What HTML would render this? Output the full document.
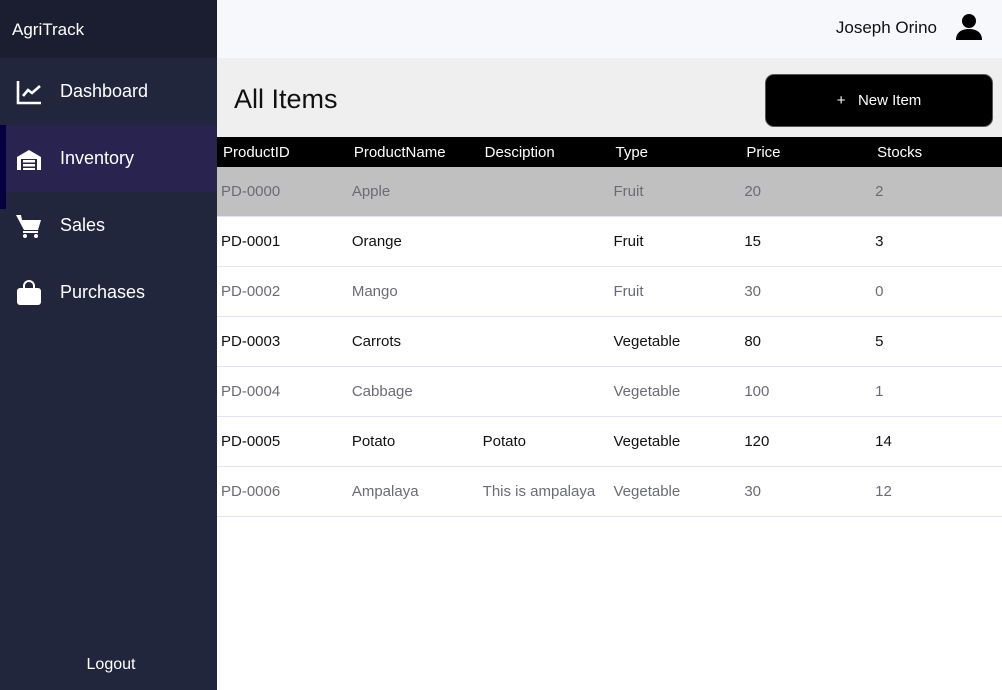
<!DOCTYPE html>
<html><head><style>
*{margin:0;padding:0;box-sizing:border-box}
body{width:1002px;height:690px;overflow:hidden;font-family:"Liberation Sans","DejaVu Sans",sans-serif;background:#fff;position:relative}
#side{position:absolute;left:0;top:0;width:217px;height:690px;background:#22263d;color:#fff}
#brand{height:58px;background:#1b1e31;font-size:17px;padding:20px 0 0 12px}
.nav{height:67px;display:flex;align-items:center;font-size:18px;position:relative}
.nav svg{position:absolute;left:16px;width:26px;height:26px}
.nav span{position:absolute;left:60px}
.nav.act{background:#29234f}
#bar{position:absolute;left:0;top:125px;width:6px;height:84px;background:#050040}
#logout{position:absolute;bottom:16px;left:0;width:222px;text-align:center;font-size:16px}
#top{position:absolute;left:217px;top:0;right:0;height:58px;background:#f7f8fc}
#user{position:absolute;right:65px;top:18px;font-size:17px;color:#111}
#head{position:absolute;left:217px;top:58px;right:0;height:79px;background:#efefef}
#head h1{position:absolute;left:17px;top:26px;font-weight:normal;font-size:27px;color:#111}
#btn{position:absolute;left:548px;top:16px;width:228px;height:53px;background:#000;border-radius:9px;border:1px solid #555;color:#fff;font-size:15px;text-align:center;line-height:51px}
#tbl{position:absolute;left:217px;top:137px;width:785px;font-size:15px}
.r{display:flex;height:50px;align-items:center;border-bottom:1px solid #e4e2fa;color:#111}
.r div{width:131.5px;padding-left:4px;white-space:nowrap}
.h{height:30px;background:#000;color:#fff;border:none}
.h div{padding-left:6px}
.g{color:#6b6b78}
.s{background:#c0c0c0;color:#6b6b78}
</style></head><body>
<div id="side">
<div id="brand">AgriTrack</div>
<div class="nav"><svg viewBox="0 0 26 26" fill="none" stroke="#fff" stroke-width="2.6"><path d="M2 2V24H25"/><path d="M7 17L12 11L16 14L24 7"/></svg><span>Dashboard</span></div>
<div class="nav act"><svg viewBox="0 0 26 26" fill="#fff"><path d="M1 11L13 4L25 11V24H21V13H5V24H1Z"/><rect x="7" y="14" width="12" height="2.5"/><rect x="7" y="18" width="12" height="2.5"/><rect x="7" y="22" width="12" height="2"/></svg><span>Inventory</span></div>
<div class="nav"><svg viewBox="0 0 26 26" fill="#fff"><path d="M0 2H5L6 7H25L22 17H8Z" /><rect x="7" y="18" width="15" height="2"/><circle cx="9" cy="23" r="2"/><circle cx="20" cy="23" r="2"/></svg><span>Sales</span></div>
<div class="nav"><svg viewBox="0 0 26 26"><path d="M8 9V6a5 5 0 0110 0v3" fill="none" stroke="#fff" stroke-width="2"/><rect x="1" y="8" width="24" height="17" rx="3" fill="#fff"/></svg><span>Purchases</span></div>
<div id="bar"></div>
<div id="logout">Logout</div>
</div>
<div id="top"><div id="user">Joseph Orino</div>
<svg style="position:absolute;right:19px;top:13px" width="28" height="28" viewBox="0 0 28 28" fill="#000"><circle cx="14" cy="8" r="7"/><path d="M1 27C1 19 7 16 14 16S27 19 27 27Z"/></svg></div>
<div id="head"><h1>All Items</h1><div id="btn">+&nbsp;&nbsp; New Item</div></div>
<div id="tbl">
<div class="r h"><div>ProductID</div><div>ProductName</div><div>Desciption</div><div>Type</div><div>Price</div><div>Stocks</div></div>
<div class="r s"><div>PD-0000</div><div>Apple</div><div></div><div>Fruit</div><div>20</div><div>2</div></div>
<div class="r"><div>PD-0001</div><div>Orange</div><div></div><div>Fruit</div><div>15</div><div>3</div></div>
<div class="r g"><div>PD-0002</div><div>Mango</div><div></div><div>Fruit</div><div>30</div><div>0</div></div>
<div class="r"><div>PD-0003</div><div>Carrots</div><div></div><div>Vegetable</div><div>80</div><div>5</div></div>
<div class="r g"><div>PD-0004</div><div>Cabbage</div><div></div><div>Vegetable</div><div>100</div><div>1</div></div>
<div class="r"><div>PD-0005</div><div>Potato</div><div>Potato</div><div>Vegetable</div><div>120</div><div>14</div></div>
<div class="r g"><div>PD-0006</div><div>Ampalaya</div><div>This is ampalaya</div><div>Vegetable</div><div>30</div><div>12</div></div>
</div>
</body></html>
